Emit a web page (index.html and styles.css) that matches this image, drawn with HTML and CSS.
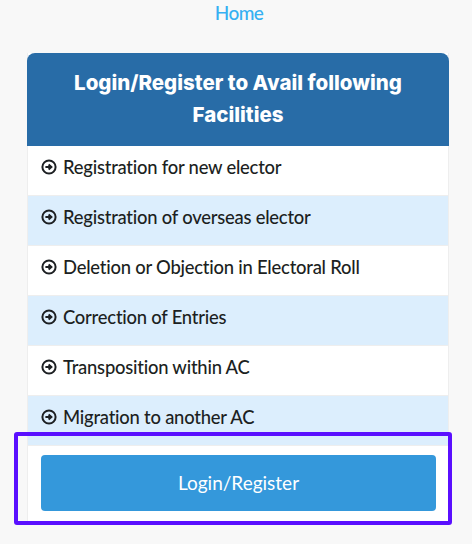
FILE: index.html
```html
<!DOCTYPE html>
<html lang="en">
<head>
    <meta charset="UTF-8">
    <title>Login/Register</title>
    <link rel="stylesheet" href="styles.css">
</head>
<body>

<div class="top">
    <a class="home" href="#">Home</a>
</div>

<div class="card">
    <div class="cardhead">Login/Register to Avail following Facilities</div>

    <ul class="facilities">
        <li>
            <svg class="arrow" viewBox="0 0 16 16"><circle cx="8" cy="8" r="6.6"/><path d="M4.4 8h5.4M7.6 5.4 10.4 8l-2.8 2.6"/></svg>
            Registration for new elector
        </li>
        <li>
            <svg class="arrow" viewBox="0 0 16 16"><circle cx="8" cy="8" r="6.6"/><path d="M4.4 8h5.4M7.6 5.4 10.4 8l-2.8 2.6"/></svg>
            Registration of overseas elector
        </li>
        <li>
            <svg class="arrow" viewBox="0 0 16 16"><circle cx="8" cy="8" r="6.6"/><path d="M4.4 8h5.4M7.6 5.4 10.4 8l-2.8 2.6"/></svg>
            Deletion or Objection in Electoral Roll
        </li>
        <li>
            <svg class="arrow" viewBox="0 0 16 16"><circle cx="8" cy="8" r="6.6"/><path d="M4.4 8h5.4M7.6 5.4 10.4 8l-2.8 2.6"/></svg>
            Correction of Entries
        </li>
        <li>
            <svg class="arrow" viewBox="0 0 16 16"><circle cx="8" cy="8" r="6.6"/><path d="M4.4 8h5.4M7.6 5.4 10.4 8l-2.8 2.6"/></svg>
            Transposition within AC
        </li>
        <li>
            <svg class="arrow" viewBox="0 0 16 16"><circle cx="8" cy="8" r="6.6"/><path d="M4.4 8h5.4M7.6 5.4 10.4 8l-2.8 2.6"/></svg>
            Migration to another AC
        </li>
    </ul>

    <div class="cardfoot">
        <a class="loginbutton" href="#">Login/Register</a>
    </div>
</div>

<div class="highlight"></div>

</body>
</html>
```

FILE: styles.css
```css
*{
    margin:0;
    padding:0;
    box-sizing: border-box;
}

html,body{
    height: 100%;
    overflow: hidden;
}

body{
    background-color: #f8f8f8;
    font-family: "Lato", "Liberation Sans", sans-serif;
    color: #1c1f22;
}

.top{
    height: 53px;
    padding-left: 6px;
    text-align: center;
}

.home{
    display: block;
    line-height: 25px;
    font-size: 19px;
    font-weight: 500;
    letter-spacing: -0.6px;
    color: #35b0f2;
    text-decoration: none;
}

.card{
    width: 422px;
    margin-left: 27px;
    background-color: #fff;
    border-left: 1px solid #eee;
    border-right: 1px solid #eee;
}

.cardhead{
    margin: 0 -1px;
    height: 93px;
    padding: 14px 10px;
    background-color: #286ca7;
    border-radius: 8px 8px 0 0;
    color: #fff;
    font-family: "Inter", "Open Sans", sans-serif;
    font-size: 20.5px;
    font-weight: 800;
    line-height: 32px;
    text-align: center;
}

.facilities{
    list-style: none;
}

.facilities li{
    display: flex;
    align-items: center;
    height: 50px;
    padding: 0 13px 8px;
    border-bottom: 1px solid #eee;
    font-size: 18.4px;
    font-weight: 500;
    letter-spacing: -0.22px;
}

.facilities li:nth-child(even){
    background-color: #dceefd;
}

.arrow{
    width: 16px;
    height: 16px;
    margin-right: 6px;
    fill: none;
    stroke: #1c1f22;
    stroke-width: 2;
}

.cardfoot{
    height: 76px;
    padding: 9px 12px 10px 13px;
}

.loginbutton{
    display: block;
    height: 56px;
    line-height: 56px;
    background-color: #3498db;
    border-radius: 4px;
    color: #fff;
    font-size: 19px;
    text-align: center;
    text-decoration: none;
}

/* annotation box drawn over the card */
.highlight{
    position: absolute;
    left: 14px;
    top: 432px;
    width: 438px;
    height: 93px;
    border: 4px solid #5a0fff;
    border-radius: 3px;
}
```
